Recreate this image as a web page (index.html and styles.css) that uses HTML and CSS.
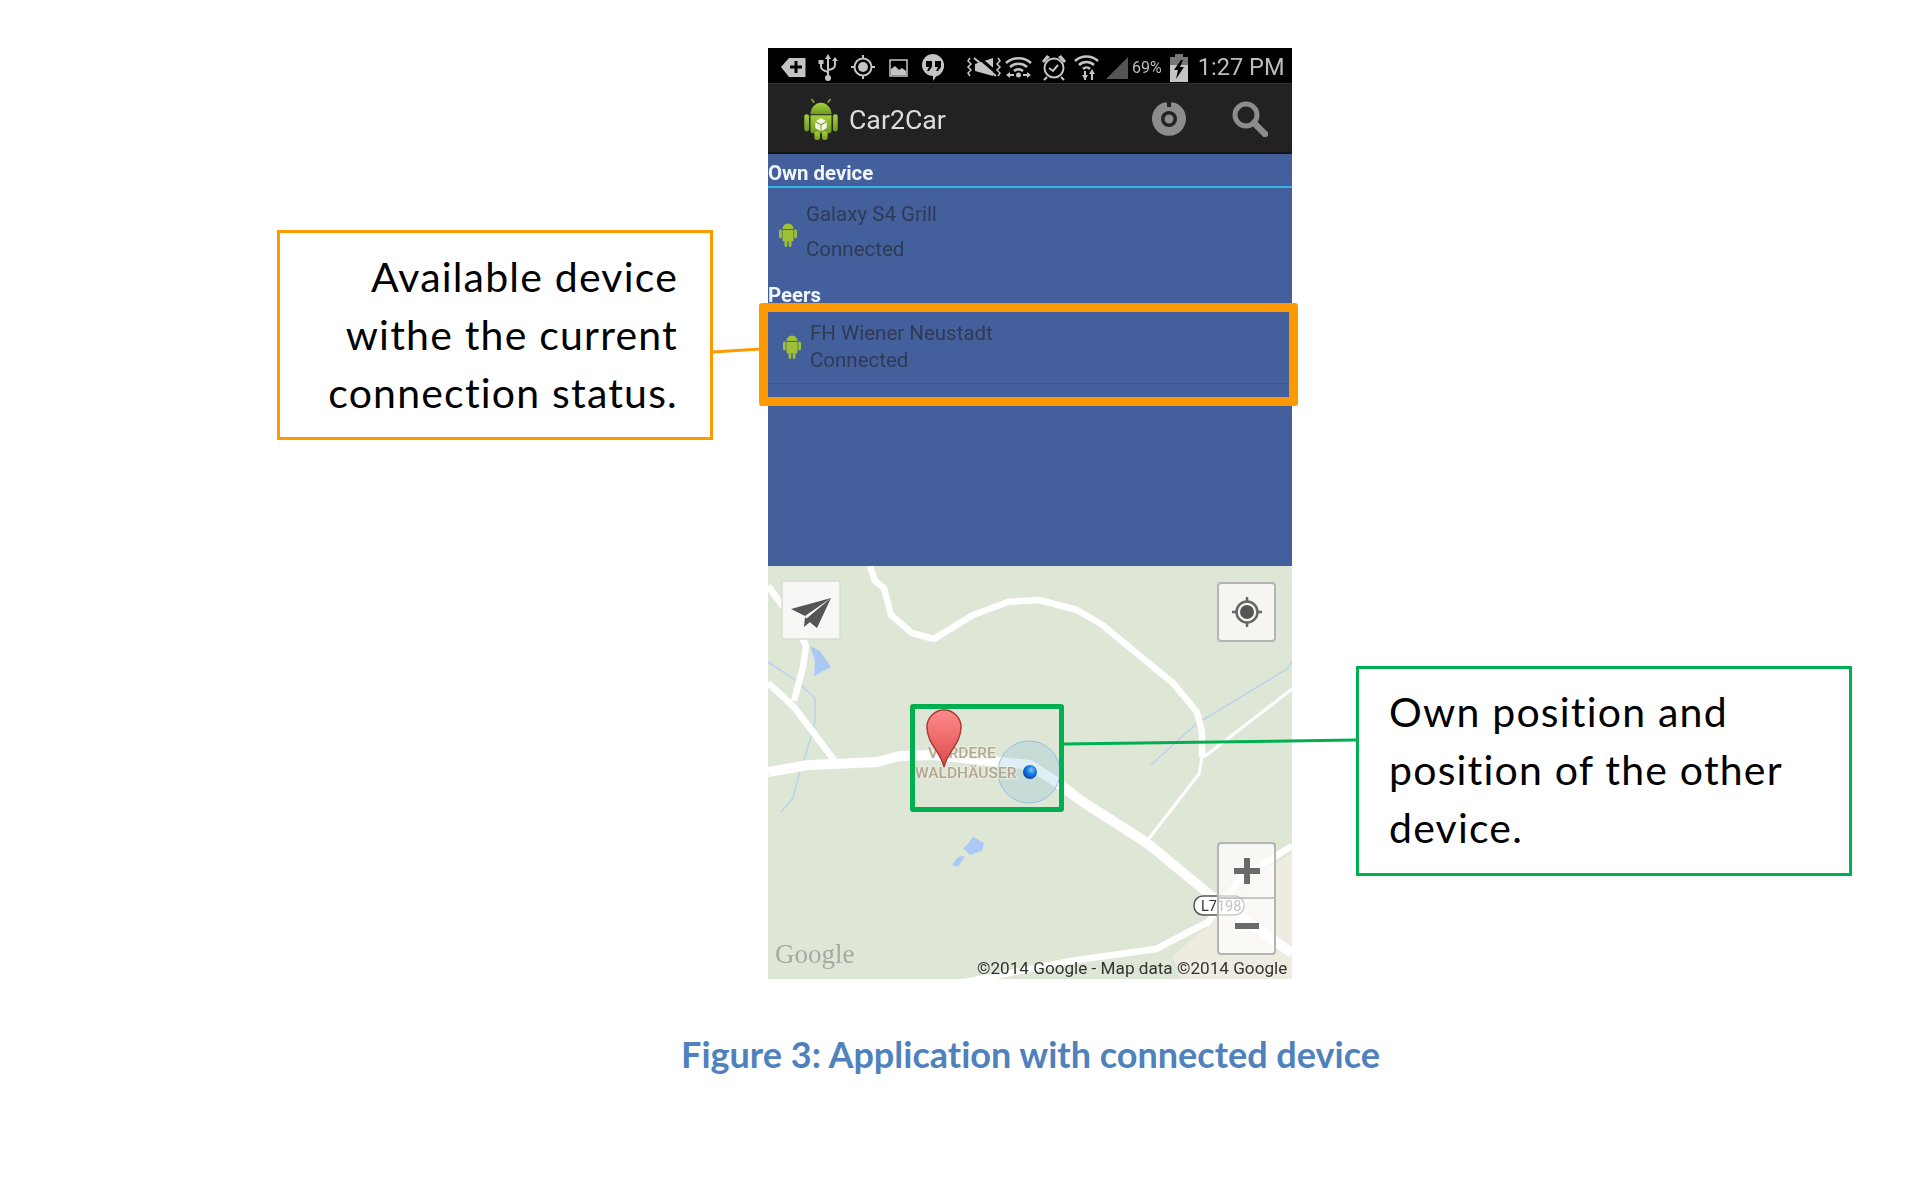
FILE: index.html
```html
<!DOCTYPE html>
<html lang="en">
<head>
<meta charset="utf-8">
<title>Figure 3: Application with connected device</title>
<link rel="stylesheet" href="styles.css">
</head>
<body>
<main class="page">
  <div class="figure">
    <aside class="callout callout-orange">Available device<br>withe the current<br>connection status.</aside>

    <section class="phone">
      <div class="screen">
        <header class="status-bar">
          <svg class="status-icons" width="362" height="35" viewBox="0 0 362 35">
            <path class="si" d="M13 19 21 10H37.500V29H21Z"/>
            <path class="sk" d="M28 13v12M22 19h12" />
            <path class="sl" d="M60 9V31M53 13v6q0 3 7 5M67 12v5q0 4-7 5"/>
            <path class="si" d="M60 6l-3 5h6ZM50.500 12h5v4h-5ZM67 9l3 4h-6Z"/>
            <circle class="si" cx="60" cy="30" r="3"/>
            <circle class="sl" cx="95" cy="19" r="8.500"/>
            <circle class="si" cx="95" cy="19" r="5"/>
            <path class="sl" d="M95 7v4M95 27v4M83 19h4M103 19h4"/>
            <rect class="sl thin" x="122" y="12" width="17" height="16"/>
            <path class="si" d="M123 27v-6l4-3 4 4 3-2 4 3v4Z"/>
            <path class="si" d="M165 6a11.500 11.500 0 0 1 3 22.500l-3 4.500v-5a11 11 0 0 1 0-22Z"/>
            <path class="sb" d="M158 13h6v6l-3 4h-2l2-4h-3ZM167 13h6v6l-3 4h-2l2-4h-3Z"/>

            <path class="si" d="M207 16 225 10V28L207 23Z"/>
            <path class="sk" d="M209 8 231 27"/>
            <path class="sl" d="M206 10 228 28"/>
            <path class="sl thin" d="M202 10l-2 3 3 3-3 3 3 3-3 3 2 3M230 10l2 3-3 3 3 3-3 3 3 3-2 3"/>

            <path class="sl wifi" d="M238 15a19 19 0 0 1 25 0M242 19a13 13 0 0 1 17 0M246 23a7 7 0 0 1 9 0"/>
            <circle class="si" cx="250.500" cy="27" r="2.500"/>
            <path class="si" d="M238 27l4-3v2h4v2h-4v2ZM263 27l-4-3v2h-4v2h4v2Z"/>

            <circle class="sl" cx="286" cy="20" r="9.500"/>
            <path class="sl" d="M281 20l4 3 5-6"/>
            <path class="si" d="M274 13l5-6 3 2-6 6ZM298 13l-5-6-3 2 6 6Z"/>
            <path class="sl" d="M279 29l-3 3M293 29l3 3"/>

            <path class="sl wifi" d="M307 13a17 17 0 0 1 23 0M311 17a11 11 0 0 1 15 0M315 21a5 5 0 0 1 7 0"/>
            <path class="sl" d="M317 23v9M324 23v9"/>
            <path class="si" d="M314 27l3 5 3-5ZM321 26l3-5 3 5Z"/>

            <path class="sg" d="M338 31 360 9V31Z"/>
          </svg>
          <span class="battery-text">69%</span>
          <svg class="battery" width="18" height="28" viewBox="0 0 18 28">
            <path class="sg2" d="M5 0h8v3h5v8H0V3h5Z"/>
            <path class="si" d="M0 11h18v17H0Z"/>
            <path class="sb" d="M11 6 4 16h4l-2 9 8-12h-4l3-7Z"/>
          </svg>
          <span class="clock">1:27 PM</span>
        </header>

        <div class="action-bar">
          <svg class="logo" width="36" height="42" viewBox="0 0 36 44">
            <defs>
              <linearGradient id="droid" x1="0" y1="0" x2="0" y2="1">
                <stop offset="0" stop-color="#a5d13c"/>
                <stop offset="1" stop-color="#6f9a22"/>
              </linearGradient>
            </defs>
            <path class="antenna" d="M11 5 8 1M25 5l3-4"/>
            <path fill="url(#droid)" d="M7 17a11 12 0 0 1 22 0Z"/>
            <path fill="url(#droid)" d="M7 18H29V34a3 3 0 0 1-3 3H10a3 3 0 0 1-3-3Z"/>
            <rect fill="url(#droid)" x="0.500" y="17" width="5" height="18" rx="2.500"/>
            <rect fill="url(#droid)" x="30.500" y="17" width="5" height="18" rx="2.500"/>
            <rect fill="url(#droid)" x="11" y="35" width="6" height="9" rx="3"/>
            <rect fill="url(#droid)" x="19" y="35" width="6" height="9" rx="3"/>
            <path fill="#f4f4ea" d="M18 21l6 3.500v7L18 35l-6-3.500v-7Z"/>
            <path class="cube" d="M12 24.500l6 3.500 6-3.500M18 28v7"/>
          </svg>
          <span class="app-title">Car2Car</span>
          <svg class="gear" width="36" height="36" viewBox="0 0 36 36">
            <path class="ag" d="M13 1.500h3V6h4V1.500h3A17 17 0 1 1 13 1.500Z"/>
            <circle class="ad" cx="18" cy="18" r="8"/>
            <circle class="ag" cx="18" cy="18" r="4.500"/>
          </svg>
          <svg class="search" width="36" height="36" viewBox="0 0 36 36">
            <circle class="as" cx="14" cy="14" r="11"/>
            <path class="as handle" d="M22 22 33 33"/>
          </svg>
        </div>

        <div class="device-list">
          <h2 class="section-head own-head">Own device</h2>
          <div class="device own-device">
            <svg class="droid-small" width="18" height="25" viewBox="0 0 18 25"><use href="#mini-droid"/></svg>
            <div class="device-text"><div>Galaxy S4 Grill</div><div>Connected</div></div>
          </div>
          <h2 class="section-head peers-head">Peers</h2>
          <div class="device peer-device">
            <svg class="droid-small" width="18" height="25" viewBox="0 0 18 25">
              <g id="mini-droid">
                <path d="M3.500 7a5.500 5.500 0 0 1 11 0ZM3.500 8h11v10a1.500 1.500 0 0 1-1.500 1.500H5A1.500 1.500 0 0 1 3.500 18Z"/>
                <rect x="0" y="7.500" width="2.800" height="9" rx="1.400"/>
                <rect x="15.200" y="7.500" width="2.800" height="9" rx="1.400"/>
                <rect x="5.500" y="19" width="2.800" height="6" rx="1.400"/>
                <rect x="9.700" y="19" width="2.800" height="6" rx="1.400"/>
              </g>
            </svg>
            <div class="device-text"><div>FH Wiener Neustadt</div><div>Connected</div></div>
          </div>
        </div>

        <div class="map">
          <svg class="map-canvas" width="524" height="413" viewBox="0 0 524 413">
            <path class="ground" d="M524 287Q490 305 474 332L440 359 405 390 412 413H524Z"/>
            <path class="river" d="M0 96 26 113 47 132V156L37 191 33 201 25 232 13 246"/>
            <path class="river" d="M383 199 428 158 519 103 524 96"/>
            <path class="lake" d="M42 80 52 85 63 101 46 110 47 95Z"/>
            <path class="lake" d="M205 271 216 277 214 285 202 289 195 282 199 279ZM197 290 190 301 184 299 190 291Z"/>
            <path class="road r6" d="M102 0 107 15 116 22 123 49 144 67 166 73 205 49 240 36 271 34 309 44 333 58 405 117 429 146 434 166V191"/>
            <path class="road r3" d="M434 191 431 208 379 275"/>
            <path class="road r3" d="M524 123 436 191"/>
            <path class="road r6" d="M0 20 26 55 38 80 35 101 26 135"/>
            <path class="road r6" d="M0 117 26 141 66 194"/>
            <path class="road r10" d="M0 206 40 199 66 198 109 196 132 190 165 189 262 199 290 217 312 234 379 277 447 333 524 387"/>
            <path class="road r6" d="M192 417 302 395 388 383 440 356 474 311 524 280"/>

            <circle class="accuracy" cx="261" cy="206" r="31"/>
            <text class="place" x="160" y="192">VORDERE</text>
            <text class="place" x="147" y="212">WALDHÄUSER</text>
            <defs>
              <radialGradient id="dot" cx="0.600" cy="0.350" r="0.700">
                <stop offset="0" stop-color="#7cc4ff"/>
                <stop offset="0.500" stop-color="#1377e0"/>
                <stop offset="1" stop-color="#0a3d9e"/>
              </radialGradient>
              <linearGradient id="pin" x1="0" y1="0" x2="0" y2="1">
                <stop offset="0" stop-color="#ff8c8c"/>
                <stop offset="1" stop-color="#dd4a4a"/>
              </linearGradient>
            </defs>
            <circle fill="url(#dot)" cx="262" cy="206" r="7"/>
            <path class="pin" fill="url(#pin)" d="M176 201C173 186 159 178 159 161A17 17 0 1 1 193 161C193 178 179 186 176 201Z"/>

            <rect class="control send" x="14" y="15" width="58" height="58" rx="2"/>
            <path class="cicon" d="M23 43 63 32 37 50ZM63 32 38 53 49 62ZM37 51 36 61 42 56Z"/>

            <rect class="control solid" x="450" y="17" width="57" height="58" rx="3"/>
            <circle class="ring" cx="479" cy="46" r="10.500"/>
            <circle class="cicon" cx="479" cy="46" r="7"/>
            <path class="ring" d="M479 31v5M479 56v5M464 46h5M489 46h5"/>

            <rect class="badge" x="426" y="330" width="50" height="19" rx="9"/>
            <text class="badge-text" x="433" y="345">L7198</text>

            <rect class="control zoom" x="450" y="277" width="57" height="111" rx="3"/>
            <path class="divider" d="M450 332H507"/>
            <path class="zoom-mark" d="M479 292V318M466 305H492M467 360H491"/>

            <text class="google" x="7" y="397">Google</text>
            <text class="copyright" x="209" y="408">©2014 Google - Map data ©2014 Google</text>
          </svg>
        </div>
      </div>
      <div class="highlight highlight-peer"></div>
      <div class="highlight highlight-map"></div>
    </section>

    <aside class="callout callout-green">Own position and<br>position of the other<br>device.</aside>
    <svg class="connectors" width="1921" height="1183" viewBox="0 0 1921 1183">
      <path class="link-orange" d="M713 352 760 349"/>
      <path class="link-green" d="M1064 744 1356 740"/>
    </svg>
  </div>
  <p class="caption">Figure 3: Application with connected device</p>
</main>
</body>
</html>
```

FILE: styles.css
```css
* { box-sizing: border-box; }
html, body { margin: 0; padding: 0; background: #fff; }
.page { position: relative; width: 1921px; height: 1183px; overflow: hidden; }
.figure { display: flex; align-items: flex-start; padding-left: 277px; }

.callout {
  font-family: Lato, "Open Sans", sans-serif;
  font-size: 41px;
  letter-spacing: 1.2px;
  line-height: 58px;
  color: #000;
  background: #fff;
  flex: none;
  white-space: nowrap;
}
.callout-orange {
  width: 436px;
  height: 210px;
  margin-top: 230px;
  border: 3px solid #ff9900;
  padding: 15px 32px 0 0;
  text-align: right;
}
.callout-green {
  width: 496px;
  height: 210px;
  margin: 666px 0 0 64px;
  border: 3px solid #00b050;
  padding: 14px 0 0 30px;
}

.phone { position: relative; flex: none; width: 524px; height: 931px; margin: 48px 0 0 55px; }
.screen { width: 524px; height: 931px; display: flex; flex-direction: column; filter: blur(0.5px); }

.status-bar { height: 35px; background: #000; display: flex; align-items: flex-start; color: #bdbdbd; font-family: Roboto, sans-serif; }
.status-icons { flex: none; }
.si { fill: #c4c4c4; }
.sb { fill: #000; }
.sg { fill: #555; }
.sg2 { fill: #777; }
.sk { fill: none; stroke: #000; stroke-width: 3; }
.sl { fill: none; stroke: #c4c4c4; stroke-width: 2; }
.sl.thin { stroke-width: 1.500; }
.sl.wifi { stroke-width: 2.500; }
.battery-text { font-size: 16px; line-height: 35px; margin: 2px 8px 0 2px; height: 33px; }
.battery { flex: none; margin-top: 6px; }
.clock { font-size: 23.600px; line-height: 38px; margin-left: 10px; white-space: nowrap; }

.action-bar { height: 71px; background: #222; border-top: 1px solid #333; border-bottom: 2px solid #151515; display: flex; align-items: center; padding-left: 35px; }
.logo { flex: none; margin-top: 1px; }
.antenna { stroke: #8cb52c; stroke-width: 1.500; fill: none; }
.cube { stroke: #7ea52a; stroke-width: 1.200; fill: none; }
.app-title { font-family: Roboto, sans-serif; font-size: 26.700px; color: #ddd; margin-left: 10px; padding-top: 4px; width: 302px; }
.gear { flex: none; margin-top: 2px; }
.ag { fill: #8c8c8c; }
.ad { fill: #222; }
.search { flex: none; margin: 2px 0 0 45px; }
.as { fill: none; stroke: #8c8c8c; stroke-width: 5; }
.as.handle { stroke-width: 6.500; stroke-linecap: round; }

.device-list { height: 412px; background: #43609c; font-family: Roboto, sans-serif; }
.section-head { margin: 0; font-size: 20.400px; font-weight: 700; color: #f1f4f8; }
.own-head { height: 34px; padding-top: 7px; line-height: 24px; border-bottom: 2px solid #33b5e5; }
.peers-head { height: 30px; padding-top: 10px; line-height: 20px; }
.device { display: flex; align-items: flex-start; color: #2f3a55; font-size: 20.500px; }
.droid-small { flex: none; fill: #9dc036; }
.own-device { height: 87px; padding: 9px 0 0 11px; line-height: 35px; }
.own-device .droid-small { margin-top: 25px; }
.own-device .device-text { margin-left: 9px; }
.peer-device { height: 79px; padding: 15px 0 0 15px; line-height: 27px; border-bottom: 1px solid #3d5890; }
.peer-device .droid-small { margin-top: 14px; }
.peer-device .device-text { margin-left: 9px; }

.map { height: 413px; background: #dee6d5; }
.map-canvas { display: block; }
.ground { fill: #eeebe0; }
.river { fill: none; stroke: #b9d3ee; stroke-width: 1.500; }
.lake { fill: #acc9f5; }
.road { fill: none; stroke: #fff; stroke-linejoin: round; }
.r3 { stroke-width: 3; }
.r6 { stroke-width: 6.500; }
.r10 { stroke-width: 10; }
.accuracy { fill: #8fc3dd; fill-opacity: 0.28; stroke: #8fc0e0; stroke-width: 1; }
.place { font-family: Roboto, sans-serif; font-size: 15.500px; font-weight: 500; fill: #b3a88f; stroke: #eef0e6; stroke-opacity: 0.6; stroke-width: 2.500; paint-order: stroke; }
.pin { stroke: #a83a3a; stroke-width: 1.500; }
.control { stroke: #c8c8c6; stroke-width: 1.500; }
.send { fill: #f7f8f5; stroke: #d8dcd2; }
.solid { fill: #f5f6f2; stroke: #b5b5b5; stroke-width: 2; }
.zoom { fill: #fff; fill-opacity: 0.7; stroke: #b4b4b4; stroke-width: 2; }
.cicon { fill: #555; }
.ring { fill: none; stroke: #666; stroke-width: 2.500; }
.badge { fill: #fff; stroke: #555; stroke-width: 1.500; }
.badge-text { font-family: Roboto, sans-serif; font-size: 14.500px; fill: #333; }
.divider { stroke: #b4b4b4; stroke-width: 1.500; }
.zoom-mark { stroke: #6a6a6a; stroke-width: 6; fill: none; }
.google { font-family: "Liberation Serif", serif; font-size: 27px; fill: #a6aaa2; }
.copyright { font-family: Roboto, sans-serif; font-size: 17.150px; fill: #333; }

.highlight { position: absolute; background: transparent; border-style: solid; border-radius: 3px; }
.highlight-peer { left: -9px; top: 255px; width: 539px; height: 103px; border-width: 9px; border-color: #ff9900; }
.highlight-map { left: 142px; top: 656px; width: 154px; height: 108px; border-width: 5px; border-color: #00b050; }

.connectors { position: absolute; left: 0; top: 0; pointer-events: none; }
.link-orange { fill: none; stroke: #ff9900; stroke-width: 3; }
.link-green { fill: none; stroke: #00b050; stroke-width: 3; }

.caption {
  margin: 55px 0 0;
  padding-left: 140px;
  text-align: center;
  font-family: Lato, "Open Sans", sans-serif;
  font-variant-ligatures: none;
  font-weight: 700;
  font-size: 36px;
  line-height: 40px;
  color: #4f81bd;
}
```
